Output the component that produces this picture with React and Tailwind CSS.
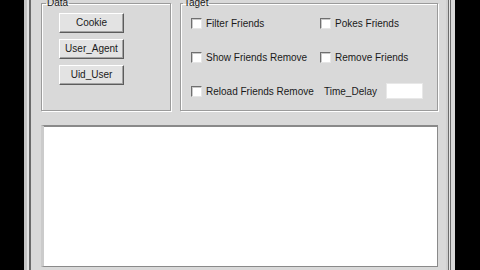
import React from 'react';

function Btn({ children }) {
  return (
    <button className="w-[65px] h-[20px] bg-[#e3e3e3] border border-t-white border-l-white border-r-[#5c5c5c] border-b-[#5c5c5c] shadow-[inset_-1px_-1px_0_#a3a3a3] text-[10px] leading-none text-[#1a1a1a]">
      {children}
    </button>
  );
}

function Check({ label }) {
  return (
    <label className="flex items-center gap-[4px] h-[16px]">
      <span className="w-[11px] h-[11px] bg-white border border-t-[#6f6f6f] border-l-[#6f6f6f] border-r-[#e6e6e6] border-b-[#e6e6e6] shadow-[inset_1px_1px_0_#c9c9c9]" />
      <span className="whitespace-nowrap">{label}</span>
    </label>
  );
}

export default function App() {
  return (
    <div className="w-[480px] h-[270px] bg-black flex overflow-hidden font-['Liberation_Sans',Arial,sans-serif] text-[10px] text-[#1a1a1a]">
      <div className="ml-[24px] w-[431px] h-full flex">
        <div className="w-[3px] bg-[#c4c4c4]" />
        <div className="w-[2px] bg-[#e2e2e2]" />
        <div className="w-[2px] bg-[#6a6a6a]" />

        <div className="flex-1 bg-[#d9d9d9] flex flex-col pl-[10px] pr-[8px]">
          <div className="flex gap-[9px] mt-[-3px] h-[114px]">
            {/* Data */}
            <fieldset className="w-[130px] h-full border border-[#9b9b9b] shadow-[inset_1px_1px_0_#fff,1px_1px_0_#fff]">
              <legend className="ml-[4px] px-[1px] leading-[12px]">Data</legend>
              <div className="flex flex-col gap-[6px] pl-[17px] mt-[4px]">
                <Btn>Cookie</Btn>
                <Btn>User_Agent</Btn>
                <Btn>Uid_User</Btn>
              </div>
            </fieldset>

            {/* Taget */}
            <fieldset className="w-[258px] h-full border border-[#9b9b9b] shadow-[inset_1px_1px_0_#fff,1px_1px_0_#fff]">
              <legend className="ml-[2px] px-[1px] leading-[12px]">Taget</legend>
              <div className="grid grid-cols-[129px_1fr] gap-y-[18px] pl-[10px] mt-[6px]">
                <Check label="Filter Friends" />
                <Check label="Pokes Friends" />
                <Check label="Show Friends Remove" />
                <Check label="Remove Friends" />
                <Check label="Reload Friends Remove" />
                <div className="flex items-center h-[16px] ml-[4px]">
                  <span className="whitespace-nowrap">Time_Delay</span>
                  <input className="ml-[9px] w-[37px] h-[16px] bg-white border border-[#e8e8e8] outline-none" />
                </div>
              </div>
            </fieldset>
          </div>

          <textarea className="mt-[14px] w-[397px] h-[142px] resize-none bg-white border border-[#8a8a8a] border-l-[3px] border-l-[#cbcbcb] shadow-[inset_0_1px_0_#8a8a8a] outline-none" />
        </div>

        <div className="w-[2px] bg-[#d0d0d0]" />
        <div className="w-[1px] bg-[#6d6d6d]" />
        <div className="w-[1px] bg-[#e4e4e4]" />
        <div className="w-[1px] bg-[#6d6d6d]" />
        <div className="w-[4px] bg-[#d9d9d9]" />
      </div>
    </div>
  );
}
